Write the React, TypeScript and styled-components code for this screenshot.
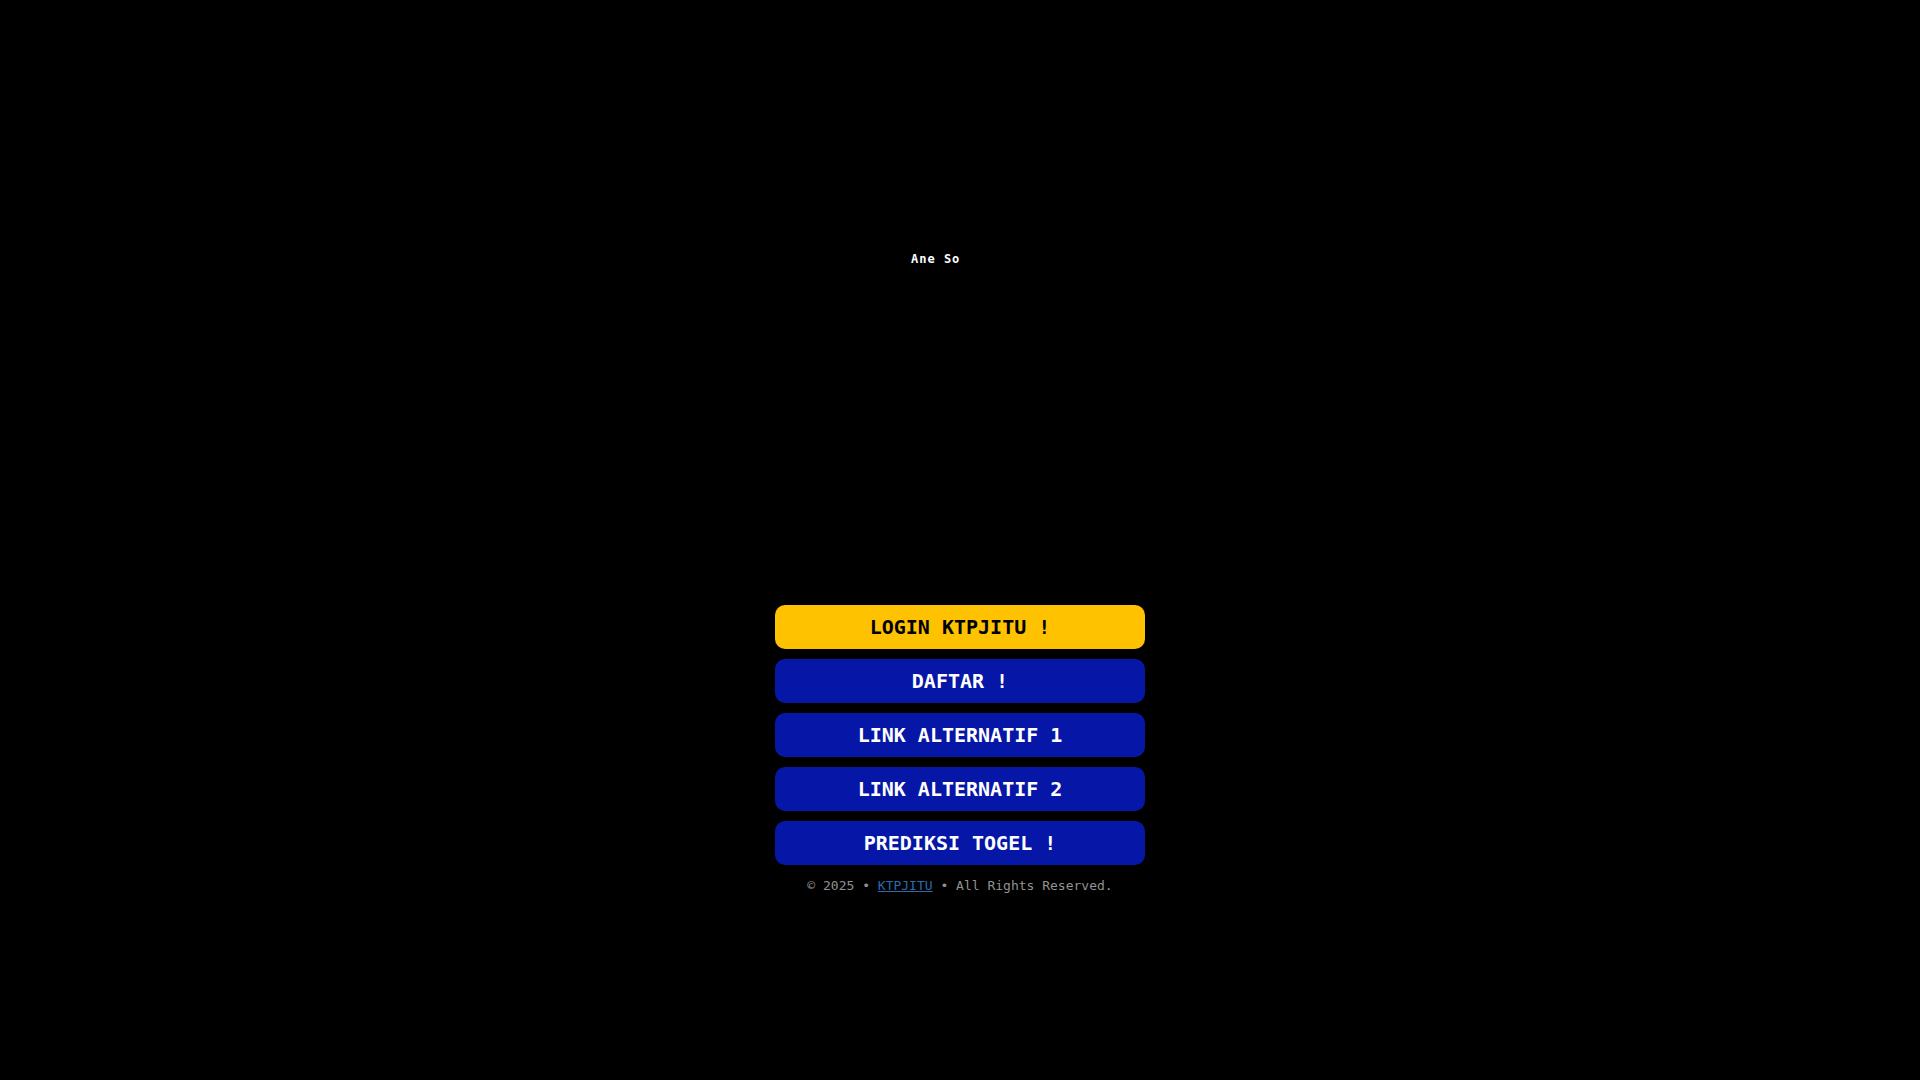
import React from "react";
import styled, { createGlobalStyle } from "styled-components";

const GlobalStyle = createGlobalStyle`
  * { box-sizing: border-box; }
  body {
    margin: 0;
    background: #000;
    font-family: "DejaVu Sans Mono", monospace;
    font-size: 16px;
    text-rendering: optimizeSpeed;
  }
`;

const Page = styled.main`
  display: flex;
  flex-direction: column;
  align-items: center;
  min-height: 100vh;
  padding: 251px 16px 16px;
`;

const Hero = styled.header`
  width: 98px;
  min-height: 354px;
`;

const Typing = styled.p`
  margin: 0;
  color: #fff;
  font-size: 12px;
  font-weight: 700;
  line-height: 16px;
  letter-spacing: 1px;
  white-space: nowrap;
`;

const Links = styled.nav`
  display: flex;
  flex-direction: column;
  gap: 10px;
  width: 100%;
  max-width: 370px;
`;

const LinkButton = styled.a<{ $primary?: boolean }>`
  padding: 10px;
  border-radius: 10px;
  background: ${(p) => (p.$primary ? "#ffc200" : "#0616a6")};
  color: ${(p) => (p.$primary ? "#000" : "#fff")};
  font-size: 20px;
  font-weight: 700;
  line-height: 24px;
  text-align: center;
  text-decoration: none;
`;

const Footer = styled.footer`
  margin-top: 12px;
  color: #929292;
  font-size: 13px;
  line-height: 18px;
  text-align: center;
`;

const BrandLink = styled.a`
  color: #2a6cad;
  text-decoration: underline;
`;

const links = [
  { label: "LOGIN KTPJITU !", primary: true },
  { label: "DAFTAR !" },
  { label: "LINK ALTERNATIF 1" },
  { label: "LINK ALTERNATIF 2" },
  { label: "PREDIKSI TOGEL !" },
];

export default function App() {
  return (
    <>
      <GlobalStyle />
      <Page>
        <Hero>
          <Typing>Ane So</Typing>
        </Hero>
        <Links>
          {links.map((link) => (
            <LinkButton key={link.label} href="#" $primary={link.primary}>
              {link.label}
            </LinkButton>
          ))}
        </Links>
        <Footer>
          © 2025 • <BrandLink href="#">KTPJITU</BrandLink> • All Rights Reserved.
        </Footer>
      </Page>
    </>
  );
}
